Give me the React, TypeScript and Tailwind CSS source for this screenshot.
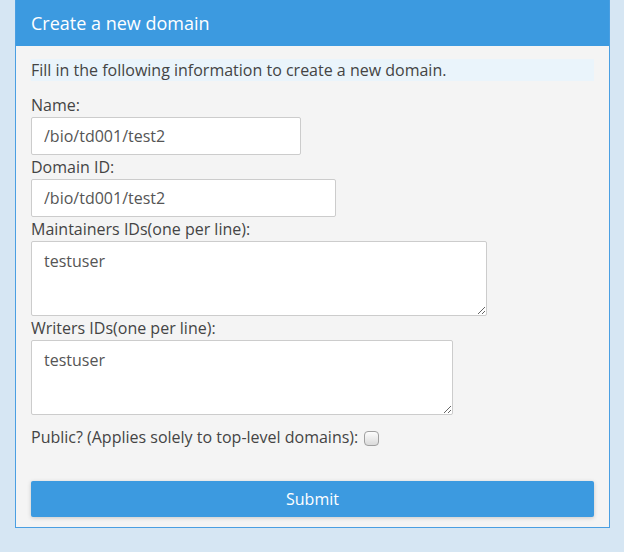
import React from "react";

export default function App() {
  const font = { fontFamily: '"Open Sans", sans-serif' };
  return (
    <div className="w-[624px] h-[552px] bg-[#d6e6f3] overflow-hidden" style={font}>
      <div className="ml-[15px] w-[595px] border border-t-0 border-[#4a9fe2] bg-[#f4f4f4]">
        <div className="h-[46px] bg-[#3c9ae0] flex items-center px-[15px] text-white text-[18px] font-medium">
          Create a new domain
        </div>
        <div className="px-[15px] pt-[13px] pb-[10px] text-[16px] text-[#444]">
          <div className="h-[22px] bg-[#eaf4fb] leading-[22px]">
            Fill in the following information to create a new domain.
          </div>
          <div className="mt-[12px] leading-[24px] h-[24px]">Name:</div>
          <input
            readOnly
            value="/bio/td001/test2"
            className="block w-[270px] h-[38px] border border-[#ccc] bg-white px-[12px] text-[16px] text-[#555] rounded-[2px] outline-none"
          />
          <div className="leading-[24px] h-[24px]">Domain ID:</div>
          <input
            readOnly
            value="/bio/td001/test2"
            className="block w-[305px] h-[38px] border border-[#ccc] bg-white px-[12px] text-[16px] text-[#555] rounded-[2px] outline-none"
          />
          <div className="leading-[24px] h-[24px]">Maintainers IDs(one per line):</div>
          <textarea
            readOnly
            value="testuser"
            className="block w-[456px] h-[75px] border border-[#ccc] bg-white px-[12px] py-[7px] text-[16px] text-[#555] rounded-[2px] outline-none"
          />
          <div className="leading-[24px] h-[24px]">Writers IDs(one per line):</div>
          <textarea
            readOnly
            value="testuser"
            className="block w-[422px] h-[75px] border border-[#ccc] bg-white px-[12px] py-[7px] text-[16px] text-[#555] rounded-[2px] outline-none"
          />
          <div className="mt-[10px] leading-[24px] h-[24px] flex items-center">
            <span>Public? (Applies solely to top-level domains):</span>
            <span className="ml-[6px] mt-[3px] inline-block w-[15px] h-[15px] rounded-[4px] border border-[#a0a0a0] bg-gradient-to-b from-[#fdfdfd] to-[#dadada]" />
          </div>
          <button className="mt-[32px] w-full h-[36px] bg-[#3c9ae0] text-white text-[16px] rounded-[2px] shadow-[0_1px_4px_rgba(0,0,0,0.18)]">
            Submit
          </button>
        </div>
      </div>
    </div>
  );
}
